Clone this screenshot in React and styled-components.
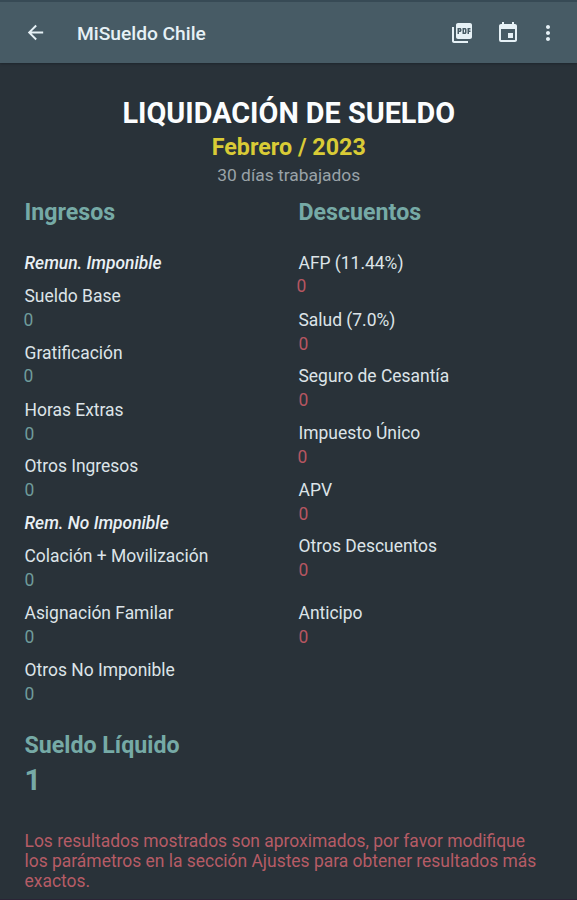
import React from 'react';
import styled, { createGlobalStyle } from 'styled-components';
import { MdArrowBack, MdPictureAsPdf, MdEvent, MdMoreVert } from 'react-icons/md';

const ingresos = [
  { label: 'Remun. Imponible', heading: true },
  { label: 'Sueldo Base', value: '0', nudge: -1 },
  { label: 'Gratificación', value: '0', nudge: -1, tight: true },
  { label: 'Horas Extras', value: '0' },
  { label: 'Otros Ingresos', value: '0' },
  { label: 'Rem. No Imponible', heading: true },
  { label: 'Colación + Movilización', value: '0' },
  { label: 'Asignación Familar', value: '0' },
  { label: 'Otros No Imponible', value: '0' },
];

const descuentos = [
  { label: 'AFP (11.44%)', value: '0', nudge: -2, tight: true },
  { label: 'Salud (7.0%)', value: '0' },
  { label: 'Seguro de Cesantía', value: '0' },
  { label: 'Impuesto Único', value: '0', nudge: -1 },
  { label: 'APV', value: '0' },
  { label: 'Otros Descuentos', value: '0', last: true },
  { label: 'Anticipo', value: '0' },
];

const Items = ({ items, color }) =>
  items.map(item =>
    item.heading ? (
      <Subheading key={item.label}>{item.label}</Subheading>
    ) : (
      <Item key={item.label} $last={item.last}>
        <Label>{item.label}</Label>
        <Value $color={color} $nudge={item.nudge} $tight={item.tight}>{item.value}</Value>
      </Item>
    )
  );

export default function App() {
  return (
    <Screen>
      <GlobalStyle />
      <Toolbar>
        <IconButton aria-label="Volver"><MdArrowBack size={23} /></IconButton>
        <AppName>MiSueldo Chile</AppName>
        <Actions>
          <IconButton aria-label="PDF"><MdPictureAsPdf size={24} /></IconButton>
          <IconButton aria-label="Fecha"><MdEvent size={24} /></IconButton>
          <IconButton aria-label="Más"><MdMoreVert size={24} /></IconButton>
        </Actions>
      </Toolbar>
      <Content>
        <Header>
          <Title>LIQUIDACIÓN DE SUELDO</Title>
          <Period>Febrero / 2023</Period>
          <Days>30 días trabajados</Days>
        </Header>
        <Columns>
          <Column>
            <SectionTitle>Ingresos</SectionTitle>
            <Items items={ingresos} color="#6f9c9b" />
          </Column>
          <Column>
            <SectionTitle>Descuentos</SectionTitle>
            <Items items={descuentos} color="#b65661" />
          </Column>
        </Columns>
        <Total>
          <TotalLabel>Sueldo Líquido</TotalLabel>
          <TotalValue>1</TotalValue>
        </Total>
        <Notice>
          Los resultados mostrados son aproximados, por favor modifique los
          parámetros en la sección Ajustes para obtener resultados más exactos.
        </Notice>
      </Content>
    </Screen>
  );
}

const GlobalStyle = createGlobalStyle`
  * {
    box-sizing: border-box;
  }

  body {
    margin: 0;
    background-color: #293239;
    font-family: Roboto, "Liberation Sans", sans-serif;
  }
`;

const Screen = styled.div`
  width: 577px;
  height: 900px;
  overflow: hidden;
  background-color: #293239;
  border-bottom: 1px solid #2b2436;
`;

const Toolbar = styled.header`
  display: flex;
  align-items: center;
  height: 63px;
  padding: 2px 17px 0 24px;
  background-color: #475b65;
  border-top: 2px solid #374a55;
  box-shadow: 0 1px 2px #1e262c;
`;

const IconButton = styled.button`
  display: flex;
  padding: 0 0 2px;
  border: 0;
  background: none;
  color: #e6f1f6;
`;

const AppName = styled.h1`
  margin: 0 0 0 30px;
  font-size: 19.2px;
  line-height: 24px;
  font-weight: 500;
  color: #e6f1f6;
`;

const Actions = styled.div`
  display: flex;
  gap: 22px;
  margin-left: auto;

  button:last-child {
    margin-left: -6px;
  }
`;

const Content = styled.main`
  padding: 32px 24px 0 24.5px;
`;

const Header = styled.div`
  text-align: center;
`;

const Title = styled.h2`
  margin: 0;
  font-size: 28.8px;
  line-height: 36px;
  font-weight: 700;
  color: #fbfdfe;
`;

const Period = styled.div`
  font-size: 23.3px;
  line-height: 33px;
  font-weight: 700;
  color: #d9cb36;
`;

const Days = styled.div`
  font-size: 17.4px;
  line-height: 23px;
  color: #9aa3a8;
`;

const Columns = styled.div`
  display: grid;
  grid-template-columns: 274px 1fr;
  margin-top: 11px;
`;

const Column = styled.section``;

const SectionTitle = styled.h3`
  margin: 0 0 27px;
  font-size: 23.2px;
  line-height: 28px;
  font-weight: 700;
  color: #76aaa6;
`;

const Subheading = styled.div`
  height: 33.3px;
  font-size: 17.4px;
  line-height: 20px;
  font-style: italic;
  font-weight: 500;
  color: #e9f0f4;
`;

const Item = styled.div`
  height: ${props => (props.$last ? 66.7 : 56.7)}px;
`;

const Label = styled.div`
  font-size: 17.45px;
  line-height: 20px;
  color: #dde4e8;
`;

const Value = styled.div`
  margin-left: ${props => props.$nudge || 0}px;
  padding-top: ${props => (props.$tight ? 3 : 4)}px;
  font-size: 17.45px;
  line-height: 20px;
  color: ${props => props.$color};
`;

const Total = styled.div`
  margin-top: 14.6px;
`;

const TotalLabel = styled.div`
  font-size: 23.2px;
  line-height: 28px;
  font-weight: 700;
  color: #76aaa6;
`;

const TotalValue = styled.div`
  font-size: 28.8px;
  line-height: 43px;
  font-weight: 700;
  color: #76aaa6;
`;

const Notice = styled.p`
  margin: 28.5px 0 0;
  padding-right: 12px;
  font-size: 17.45px;
  line-height: 20.2px;
  color: #b65c66;
`;
